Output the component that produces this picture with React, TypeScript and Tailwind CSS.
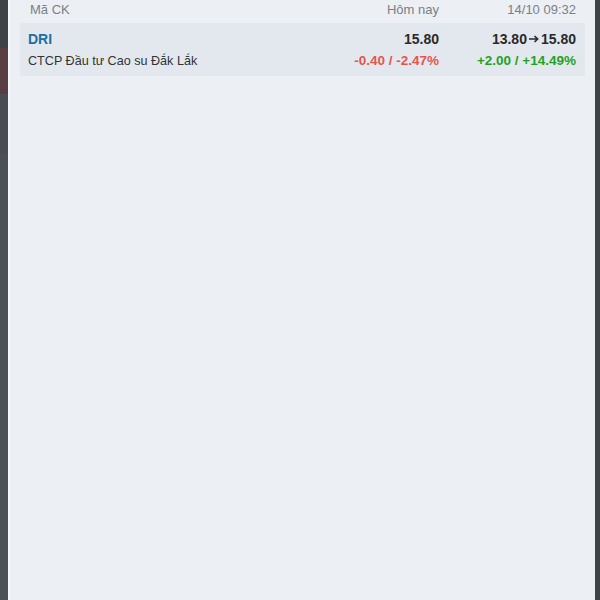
import React from "react";

export default function App() {
  return (
    <div
      className="flex w-[600px] h-[600px] overflow-hidden"
      style={{ fontFamily: '"Liberation Sans", Arial, sans-serif' }}
    >
      <div className="w-[8px] shrink-0 h-full flex flex-col bg-[#4a4f55]">
        <div className="h-[48px] bg-[#3f4348]" />
        <div className="h-[46px] bg-[#5a3e42]" />
        <div className="h-[60px] bg-[#4a4e53]" />
        <div className="flex-1 bg-[#4c5156]" />
      </div>
      <div className="flex-1 min-w-0 h-full bg-[#ecf0f4] border-l-2 border-[#f4f6f9] pl-[10px] pr-[10px]">
        <div className="h-[20px] flex items-center pl-[10px] pr-[9px] text-[13px] text-[#7a7f85]">
          <div className="flex-1">Mã CK</div>
          <div className="text-right">Hôm nay</div>
          <div className="w-[137px] text-right">14/10 09:32</div>
        </div>
        <div className="mt-[3px] bg-[#e3e8ee] rounded-[2px] pl-[8px] pr-[9px] pt-[7px] pb-[6px]">
          <div className="flex items-center h-[18px]">
            <div className="flex-1 text-[14px] font-bold text-[#1f6ea3]">DRI</div>
            <div className="text-right text-[14px] font-bold text-[#2a2a2a]">15.80</div>
            <div className="w-[137px] flex justify-end items-center text-[14px] font-bold text-[#2a2a2a]">
              <span>13.80</span>
              <svg width="12" height="10" viewBox="0 0 12 10" className="mx-[1px]">
                <path d="M1 5h8.5M6.5 2l3.2 3-3.2 3" stroke="#2a2a2a" strokeWidth="1.6" fill="none" />
              </svg>
              <span>15.80</span>
            </div>
          </div>
          <div className="flex items-center h-[18px] mt-[4px]">
            <div className="flex-1 text-[12.6px] text-[#333]">CTCP Đầu tư Cao su Đắk Lắk</div>
            <div className="text-right text-[13.5px] font-bold text-[#e2574c]">-0.40 / -2.47%</div>
            <div className="w-[137px] text-right text-[13.5px] font-bold text-[#1fa31f]">+2.00 / +14.49%</div>
          </div>
        </div>
      </div>
      <div className="w-[5px] shrink-0 h-full bg-[#3d4247]" />
    </div>
  );
}
